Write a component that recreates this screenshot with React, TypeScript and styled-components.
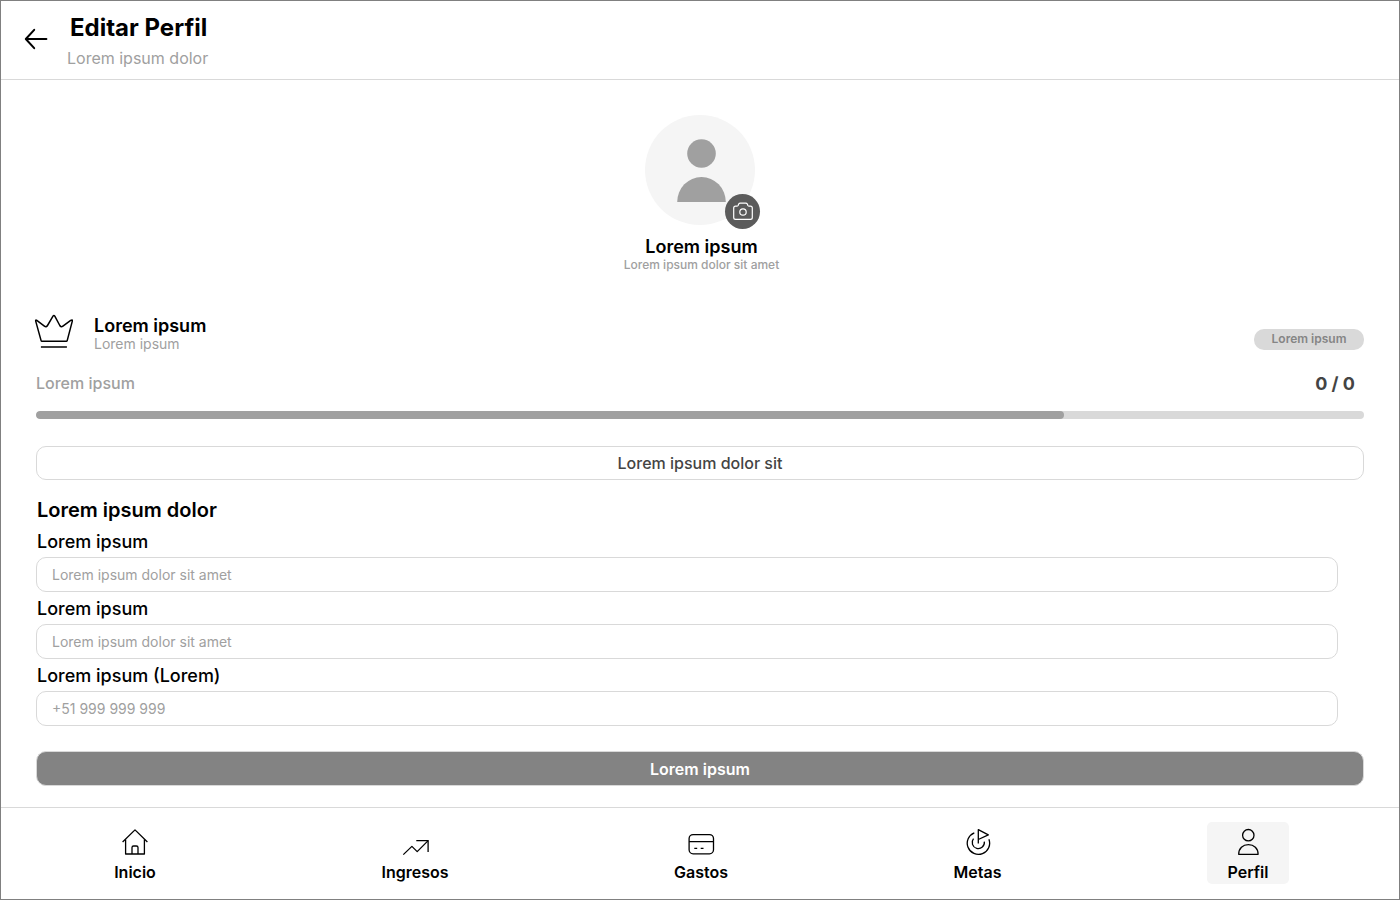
import React from 'react';
import styled, { createGlobalStyle } from 'styled-components';

const GlobalStyle = createGlobalStyle`
  *, *::before, *::after { box-sizing: border-box; }
  body {
    margin: 0;
    background: #fff;
    color: #000;
    font-family: Inter, "Liberation Sans", sans-serif;
  }
  h1, h2, p { margin: 0; }
`;

const Screen = styled.div`
  display: flex;
  flex-direction: column;
  min-height: 100vh;
  border: 1px solid #808080;
`;

const Header = styled.header`
  display: flex;
  align-items: flex-start;
  gap: 16px;
  padding: 12px 20px 9px;
  border-bottom: 1px solid #d9d9d9;
`;

const BackButton = styled.button`
  display: flex;
  margin-top: 11px;
  padding: 0;
  border: 0;
  background: none;
  cursor: pointer;
`;

const PageTitle = styled.h1`
  padding-left: 3px;
  font-size: 24px;
  line-height: 30px;
  font-weight: 700;
`;

const Muted = styled.p<{ $size: number; $line: number; $medium?: boolean }>`
  font-size: ${(p) => p.$size}px;
  line-height: ${(p) => p.$line}px;
  font-weight: ${(p) => (p.$medium ? 500 : 400)};
  color: #a0a0a0;
`;

const HeaderText = styled.div`
  display: flex;
  flex-direction: column;
  gap: 3px;
`;

const Main = styled.main`
  flex: 1;
  display: flex;
  flex-direction: column;
  padding: 35px 35px 20px;
`;

const Profile = styled.section`
  display: flex;
  flex-direction: column;
  align-items: center;
`;

const ProfileText = styled.div`
  padding-left: 3px;
  text-align: center;
`;

const Avatar = styled.div`
  position: relative;
  width: 110px;
  height: 110px;
  margin-bottom: 11px;
  border-radius: 50%;
  background: #f5f5f5;
`;

const CameraButton = styled.button`
  position: absolute;
  right: -5px;
  bottom: -4px;
  display: flex;
  width: 35px;
  height: 35px;
  padding: 0;
  border: 0;
  border-radius: 50%;
  background: #5b5b5b;
  cursor: pointer;
`;

const Name = styled.h2`
  font-size: 18px;
  line-height: 22px;
  font-weight: 600;
`;

const Plan = styled.section`
  display: flex;
  align-items: center;
  gap: 20px;
  margin-top: 42px;
`;

const PlanText = styled.div`
  flex: 1;
`;

const Tag = styled.span`
  align-self: flex-end;
  width: 110px;
  margin-bottom: 2px;
  padding-bottom: 1px;
  border-radius: 10px;
  background: #d9d9d9;
  color: #858585;
  font-size: 12px;
  line-height: 20px;
  font-weight: 600;
  text-align: center;
`;

const Usage = styled.div`
  display: flex;
  justify-content: space-between;
  align-items: flex-start;
  margin-top: 20px;
  padding-right: 9px;
`;

const Count = styled.span`
  color: #444;
  font-size: 18px;
  line-height: 24px;
  font-weight: 700;
`;

const Track = styled.div`
  height: 8px;
  margin-top: 15px;
  border-radius: 4px;
  background: #d9d9d9;
  overflow: hidden;
`;

const Fill = styled.div`
  height: 100%;
  border-radius: 4px;
  background: #a0a0a0;
`;

const Action = styled.button<{ $filled?: boolean }>`
  width: 100%;
  height: ${(p) => (p.$filled ? 35 : 34)}px;
  padding: 0;
  border: 1px solid #d9d9d9;
  border-radius: 10px;
  background: ${(p) => (p.$filled ? '#838383' : '#fff')};
  color: ${(p) => (p.$filled ? '#fff' : '#444')};
  font-family: inherit;
  font-size: 16px;
  font-weight: ${(p) => (p.$filled ? 600 : 500)};
  cursor: pointer;
`;

const PlanAction = styled.div`
  margin-top: 27px;
`;

const Form = styled.form`
  display: flex;
  flex-direction: column;
  margin-top: 18px;
`;

const FormTitle = styled.h2`
  padding-left: 1px;
  font-size: 20px;
  line-height: 24px;
  font-weight: 600;
`;

const Fields = styled.div`
  display: flex;
  flex-direction: column;
  gap: 5px;
  margin: 8px 26px 25px 0;
`;

const Field = styled.div`
  display: flex;
  flex-direction: column;
  gap: 3px;
`;

const Label = styled.label`
  padding-left: 1px;
  font-size: 18px;
  line-height: 24px;
  font-weight: 500;
`;

const Input = styled.input`
  width: 100%;
  height: 35px;
  padding: 0 15px;
  border: 1px solid #d9d9d9;
  border-radius: 10px;
  background: #fff;
  font-family: inherit;
  font-size: 14px;
  &::placeholder { color: #a0a0a0; opacity: 1; }
`;

const Nav = styled.nav`
  display: flex;
  justify-content: space-between;
  padding: 14px 110px 15px 93px;
  border-top: 1px solid #d9d9d9;
`;

const NavLink = styled.a<{ $active?: boolean }>`
  display: flex;
  flex-direction: column;
  align-items: center;
  gap: 4px;
  min-width: 82px;
  padding: 6px 20px 0;
  border-radius: 5px;
  background: ${(p) => (p.$active ? '#f5f5f5' : 'transparent')};
  color: #000;
  font-size: 16px;
  line-height: 24px;
  font-weight: 600;
  text-decoration: none;
`;

const NavIcon = ({ children }: { children: React.ReactNode }) => (
  <svg width="28" height="28" viewBox="0 0 28 28" fill="none" stroke="#000" strokeWidth="1.3" strokeLinejoin="round" aria-hidden="true">
    {children}
  </svg>
);

const navItems = [
  {
    label: 'Inicio',
    icon: (
      <>
        <path d="M1.6 14 14 1.9 26.4 14" />
        <path d="M4.6 11.4V26h18.8V11.4" />
        <path d="M11 26v-6.4q0-1.6 1.6-1.6h2.8q1.6 0 1.6 1.6V26" />
      </>
    ),
  },
  {
    label: 'Ingresos',
    icon: (
      <>
        <path d="M2.3 26.6 10.9 18.4 16.2 23.6 26.9 12.9" />
        <path d="M15.3 12.7h11.8v11.2" strokeLinejoin="miter" />
      </>
    ),
  },
  {
    label: 'Gastos',
    icon: (
      <>
        <rect x="2.1" y="6.6" width="24.4" height="19.2" rx="4" />
        <path d="M2.1 13.6h24.4M7.3 20.3h2.9M13.7 20.3h2.8" />
      </>
    ),
  },
  {
    label: 'Metas',
    icon: (
      <>
        <path d="M10.3 4.8A11.2 11.2 0 1 0 24.9 11.2" />
        <path d="M9.5 10.7A6.1 6.1 0 1 0 20.3 13.6" />
        <path d="M14.3 15.6V1.7l10 5.2-10 4.6" />
      </>
    ),
  },
  {
    label: 'Perfil',
    active: true,
    icon: (
      <>
        <circle cx="14.3" cy="7.2" r="5.7" />
        <path d="M4.7 26.3C4.7 20.4 8.8 16.6 14.4 16.6s9.7 3.8 9.7 9.7z" />
      </>
    ),
  },
];

const fields = [
  { id: 'name', label: 'Lorem ipsum', placeholder: 'Lorem ipsum dolor sit amet', type: 'text' },
  { id: 'email', label: 'Lorem ipsum', placeholder: 'Lorem ipsum dolor sit amet', type: 'text' },
  { id: 'phone', label: 'Lorem ipsum (Lorem)', placeholder: '+51 999 999 999', type: 'tel' },
];

const progress = 77.4;

export default function App() {
  return (
    <>
      <GlobalStyle />
      <Screen>
        <Header>
          <BackButton type="button" aria-label="Volver">
            <svg width="30" height="30" viewBox="0 0 30 30" fill="none" stroke="#000" strokeWidth="2" strokeLinecap="round" strokeLinejoin="round">
              <path d="M25.4 15H5M13.2 5.8 4.8 15l8.4 9.2" />
            </svg>
          </BackButton>
          <HeaderText>
            <PageTitle>Editar Perfil</PageTitle>
            <Muted $size={16} $line={24}>Lorem ipsum dolor</Muted>
          </HeaderText>
        </Header>

        <Main>
          <Profile>
            <Avatar>
              <svg width="110" height="110" viewBox="0 0 110 110" fill="#a0a0a0" aria-hidden="true">
                <circle cx="56.5" cy="38.5" r="14.3" />
                <path d="M32.2 87a24.3 25 0 0 1 48.6 0z" />
              </svg>
              <CameraButton type="button" aria-label="Cambiar foto">
                <svg width="35" height="35" viewBox="0 0 35 35" fill="none" stroke="#fff" strokeWidth="1.2" strokeLinejoin="round">
                  <path d="M8.7 14.1q0-1.9 1.9-1.9h1.1q1 0 1.4-.8l.6-1.3q.5-1 1.6-1h5.4q1.1 0 1.6 1l.6 1.3q.4.8 1.4.8h1.1q1.9 0 1.9 1.9v9.4q0 1.9-1.9 1.9H10.6q-1.9 0-1.9-1.9z" />
                  <circle cx="18" cy="18" r="3.2" />
                </svg>
              </CameraButton>
            </Avatar>
            <ProfileText>
              <Name>Lorem ipsum</Name>
              <Muted $size={12} $line={14} $medium>Lorem ipsum dolor sit amet</Muted>
            </ProfileText>
          </Profile>

          <Plan>
            <svg width="38" height="38" viewBox="0.6 0 38 38" overflow="visible" fill="none" stroke="#000" strokeWidth="1.5" strokeLinejoin="round" aria-hidden="true">
              <path d="M6.5 27.3Q5.9 27.3 5.7 26.6L.3 7.1Q0 5.5 1.4 6.4L9 12.1Q10.9 13.5 12.1 11.5L17.6 2.2Q18.5 .7 19.4 2.2L24.4 11.5Q25.6 13.5 27.5 12.1L35.3 6.4Q37.3 5.3 36.9 7.1L31.8 26.6Q31.6 27.3 30.9 27.3z" />
              <path d="M5.5 33h26" />
            </svg>
            <PlanText>
              <Name>Lorem ipsum</Name>
              <Muted $size={14} $line={14}>Lorem ipsum</Muted>
            </PlanText>
            <Tag>Lorem ipsum</Tag>
          </Plan>

          <Usage>
            <Muted $size={16} $line={22} $medium>Lorem ipsum</Muted>
            <Count>0 / 0</Count>
          </Usage>
          <Track role="progressbar" aria-label="Lorem ipsum" aria-valuenow={progress} aria-valuemin={0} aria-valuemax={100}>
            <Fill style={{ width: `${progress}%` }} />
          </Track>

          <PlanAction>
            <Action type="button">Lorem ipsum dolor sit</Action>
          </PlanAction>

          <Form>
            <FormTitle>Lorem ipsum dolor</FormTitle>
            <Fields>
              {fields.map((f) => (
                <Field key={f.id}>
                  <Label htmlFor={f.id}>{f.label}</Label>
                  <Input id={f.id} type={f.type} placeholder={f.placeholder} />
                </Field>
              ))}
            </Fields>
            <Action type="button" $filled>Lorem ipsum</Action>
          </Form>
        </Main>

        <Nav>
          {navItems.map((item) => (
            <NavLink key={item.label} href="#" $active={item.active}>
              <NavIcon>{item.icon}</NavIcon>
              {item.label}
            </NavLink>
          ))}
        </Nav>
      </Screen>
    </>
  );
}
